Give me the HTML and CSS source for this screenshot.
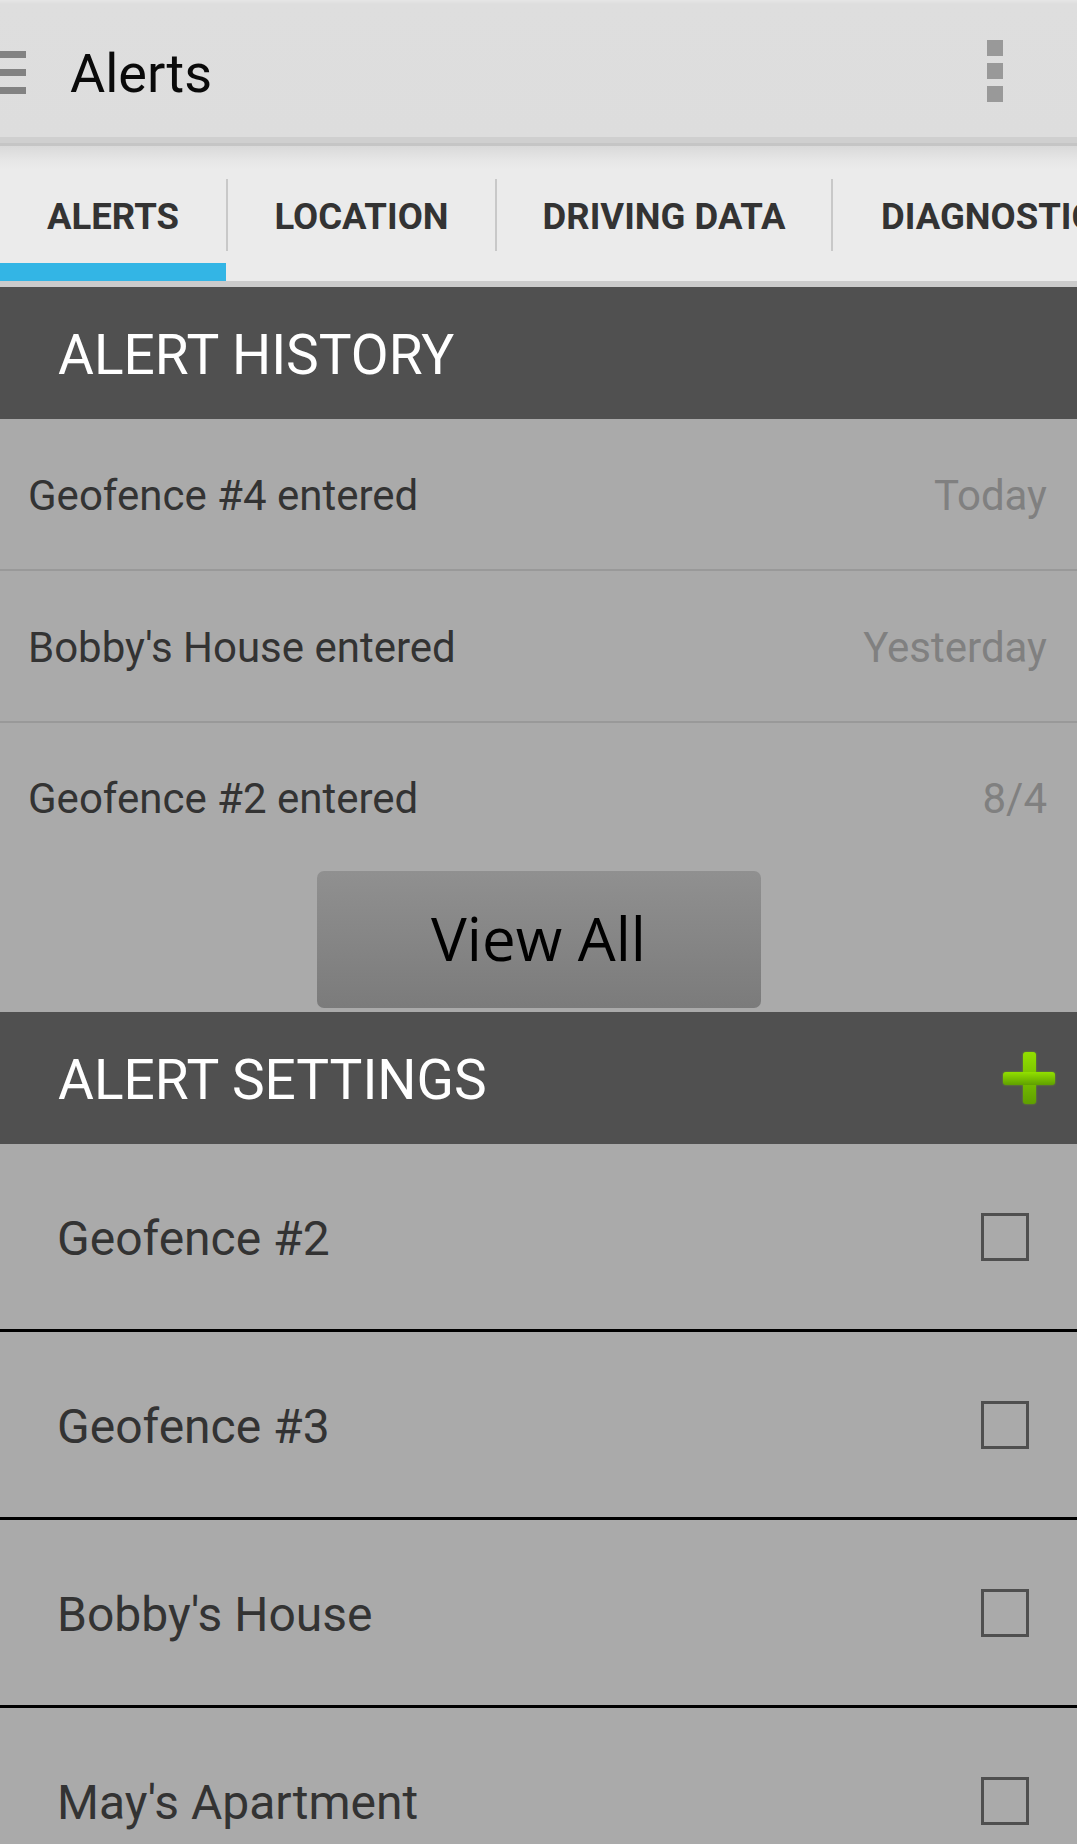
FILE: index.html
```html
<!DOCTYPE html>
<html>
<head>
<meta charset="utf-8">
<title>Alerts</title>
<link rel="stylesheet" href="styles.css">
</head>
<body>
<div class="screen">
  <header class="appbar">
    <div class="hamburger"><span></span><span></span><span></span></div>
    <h1 class="title">Alerts</h1>
    <div class="overflow"><span></span><span></span><span></span></div>
  </header>
  <div class="appbar-edge"></div>
  <nav class="tabs">
    <div class="tab tab-1 active">ALERTS</div>
    <div class="tab-sep"></div>
    <div class="tab tab-2">LOCATION</div>
    <div class="tab-sep"></div>
    <div class="tab tab-3">DRIVING DATA</div>
    <div class="tab-sep"></div>
    <div class="tab tab-4">DIAGNOSTICS</div>
  </nav>

  <section class="section">
    <div class="section-head"><span>ALERT HISTORY</span></div>
    <div class="history-row"><span class="h-name">Geofence #4 entered</span><span class="h-date">Today</span></div>
    <div class="history-row"><span class="h-name">Bobby's House entered</span><span class="h-date">Yesterday</span></div>
    <div class="history-row last"><span class="h-name">Geofence #2 entered</span><span class="h-date">8/4</span></div>
    <div class="more"><button class="view-all">View All</button></div>
  </section>

  <section class="section">
    <div class="section-head">
      <span>ALERT SETTINGS</span>
      <svg class="plus" width="52" height="52" viewBox="0 0 52 52">
        <defs>
          <linearGradient id="g" x1="0" y1="0" x2="0" y2="1">
            <stop offset="0" stop-color="#92e000"/>
            <stop offset="1" stop-color="#5fa000"/>
          </linearGradient>
        </defs>
        <rect x="20" y="0" width="13" height="52" rx="3" fill="url(#g)"/>
        <rect x="0" y="20" width="52" height="13" rx="3" fill="url(#g)"/>
      </svg>
    </div>
    <div class="setting-row"><span class="s-name">Geofence #2</span><span class="check"></span></div>
    <div class="setting-row"><span class="s-name">Geofence #3</span><span class="check"></span></div>
    <div class="setting-row"><span class="s-name">Bobby's House</span><span class="check"></span></div>
    <div class="setting-row"><span class="s-name">May's Apartment</span><span class="check"></span></div>
  </section>
</div>
</body>
</html>
```

FILE: styles.css
```css
* { box-sizing: border-box; }
html, body { margin: 0; padding: 0; }
body {
  width: 1077px;
  height: 1844px;
  overflow: hidden;
  background: #aaaaaa;
  font-family: Roboto, "Noto Sans", sans-serif;
}
.screen { width: 1077px; }

/* App bar */
.appbar {
  height: 137px;
  background: linear-gradient(#e6e6e6 0, #dedede 4px, #dddddd 100%);
  display: flex;
  align-items: center;
  padding-top: 6px;
}
.hamburger {
  width: 26px;
  display: flex;
  flex-direction: column;
  gap: 11px;
  margin-top: 2px;
}
.hamburger span {
  display: block;
  height: 7px;
  background: #828282;
}
.title {
  margin: 0 0 0 44px;
  padding-top: 4px;
  font-size: 54px;
  font-weight: 400;
  color: #0a0a0a;
  flex: 1;
}
.overflow {
  display: flex;
  flex-direction: column;
  gap: 7px;
  margin-right: 74px;
  margin-top: -2px;
}
.overflow span {
  display: block;
  width: 16px;
  height: 16px;
  background: #999999;
}
.appbar-edge {
  height: 9px;
  background: linear-gradient(#cfcfcf 0, #cfcfcf 6px, #c5c5c5 6px, #c5c5c5 9px);
}

/* Tabs */
.tabs {
  display: flex;
  height: 141px;
  overflow: hidden;
  background: linear-gradient(#d9d9d9 0, #e6e6e6 14px, #ebebeb 24px, #ebebeb 100%);
  border-bottom: 6px solid #cbcbcb;
}
.tab {
  position: relative;
  flex: none;
  display: flex;
  align-items: center;
  justify-content: center;
  font-size: 36.5px;
  font-weight: 700;
  color: #333333;
  white-space: nowrap;
  padding-top: 6px;
}
.tab-1 { width: 226px; }
.tab-2 { width: 267px; }
.tab-3 { width: 334px; }
.tab-4 { width: 320px; justify-content: flex-start; padding-left: 48px; }
.tab.active::after {
  content: "";
  position: absolute;
  left: 0;
  right: 0;
  bottom: -6px;
  height: 24px;
  background: linear-gradient(#33b5e5 0, #33b5e5 18px, #2a9dcb 18px);
}
.tab-sep {
  flex: none;
  width: 2px;
  margin: 33px 0 30px;
  background: #c8c8c8;
}

/* Sections */
.section-head {
  height: 132px;
  background: #505050;
  color: #ffffff;
  display: flex;
  align-items: center;
  justify-content: space-between;
  padding: 0 22px 0 58px;
  font-size: 55px;
  font-weight: 400;
}
.section-head span { padding-top: 4px; }
.plus { display: block; filter: drop-shadow(0 0 1px rgba(120, 200, 0, 0.6)); }

.history-row {
  height: 152px;
  display: flex;
  align-items: center;
  justify-content: space-between;
  padding: 2px 30px 0 28px;
  border-bottom: 2px solid #999999;
  font-size: 42px;
}
.history-row.last { height: 148px; border-bottom: none; }
.h-name { color: #333333; }
.h-date { color: #808080; }

.more {
  display: flex;
  justify-content: center;
  padding-bottom: 4px;
}
.view-all {
  width: 444px;
  height: 137px;
  border: none;
  border-radius: 7px;
  background: linear-gradient(#909090, #7b7b7b);
  font-family: "Open Sans", "DejaVu Sans", sans-serif;
  font-size: 60px;
  color: #000000;
  padding: 0 0 4px;
}

.setting-row {
  height: 188px;
  display: flex;
  align-items: center;
  justify-content: space-between;
  padding: 0 48px 0 57px;
  border-bottom: 3px solid #000000;
  font-size: 48px;
  color: #333333;
}
.s-name { padding-top: 4px; }
.check {
  width: 48px;
  height: 48px;
  border: 3px solid #4f4f4f;
  flex: none;
}
```
